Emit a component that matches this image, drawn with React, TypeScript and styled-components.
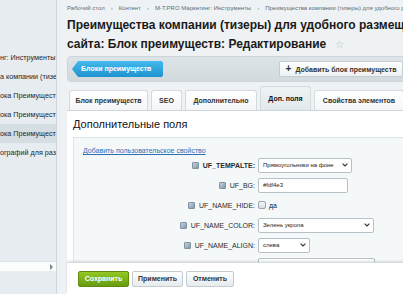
import React from 'react';
import styled, { createGlobalStyle } from 'styled-components';

const GlobalStyle = createGlobalStyle`
  html, body {
    margin: 0;
    padding: 0;
  }
  body {
    width: 403px;
    height: 294px;
    overflow: hidden;
    background: #eef2f4;
    font-family: "Liberation Sans", Arial, sans-serif;
    color: #000;
  }
`;

const Page = styled.div`
  display: flex;
  width: 403px;
  height: 294px;
  overflow: hidden;
`;

const Sidebar = styled.div`
  width: 57px;
  flex-shrink: 0;
  box-sizing: border-box;
  background: #e6ecef;
  border-right: 1px solid #cdd6db;
  display: flex;
  flex-direction: column;
  padding-top: 48px;
  overflow: hidden;
`;

const MenuItem = styled.div<{ $active?: boolean }>`
  height: 19px;
  line-height: 19px;
  white-space: nowrap;
  overflow: hidden;
  font-size: 7.2px;
  color: #1e272c;
  background: ${p => (p.$active ? '#d5dee3' : 'transparent')};
`;

const SideScroll = styled.div`
  margin-top: auto;
  margin-bottom: 23px;
  height: 9px;
  background: #fbfcfc;
  border-top: 1px solid #dbe2e5;
  display: flex;
  justify-content: flex-end;
  align-items: center;
  padding-right: 3px;
`;

const ScrollArrow = styled.span`
  width: 0;
  height: 0;
  border-top: 3px solid transparent;
  border-bottom: 3px solid transparent;
  border-left: 3px solid #7d878c;
`;

const Main = styled.div`
  width: 346px;
  flex-shrink: 0;
  padding-left: 10px;
  display: flex;
  flex-direction: column;
  overflow: hidden;
`;

const Column = styled.div`
  width: 345px;
  display: flex;
  flex-direction: column;
`;

const Breadcrumbs = styled.div`
  margin-top: 4px;
  height: 8px;
  line-height: 8px;
  font-size: 6px;
  color: #5d6c75;
  white-space: nowrap;
`;

const Sep = styled.span`
  margin: 0 6px;
  color: #8a979e;
`;

const Title = styled.h1`
  margin: 4px 0 0;
  font-size: 12px;
  line-height: 19px;
  font-weight: bold;
  color: #1a1a1a;
  white-space: nowrap;
`;

const Star = styled.span`
  margin-left: 9px;
  font-size: 10px;
  line-height: 10px;
  font-weight: normal;
  color: #b4bdc3;
`;

const Toolbar = styled.div`
  margin-top: 2px;
  height: 26px;
  width: 345px;
  box-sizing: border-box;
  border-radius: 4px;
  background: linear-gradient(#dde4e7, #d2dade);
  border: 1px solid #cdd5d9;
  display: flex;
  align-items: center;
  justify-content: space-between;
  padding: 0 8px 0 4px;
`;

const BackButton = styled.div`
  height: 16px;
  width: 91px;
  box-sizing: border-box;
  padding-left: 9px;
  line-height: 16px;
  font-size: 7px;
  font-weight: bold;
  color: #fff;
  border-radius: 2px;
  background: linear-gradient(#43b9ee, #1e93cf);
  clip-path: polygon(6px 0, 100% 0, 100% 100%, 6px 100%, 0 50%);
`;

const AddButton = styled.div`
  height: 16px;
  width: 124px;
  box-sizing: border-box;
  display: flex;
  align-items: center;
  justify-content: center;
  gap: 4px;
  font-size: 7px;
  font-weight: bold;
  color: #333;
  border: 1px solid #c4cdd1;
  border-radius: 2px;
  background: linear-gradient(#ffffff, #eef1f2);
`;

const Plus = styled.span`
  font-size: 10px;
  line-height: 10px;
`;

const Tabs = styled.div`
  margin-top: 4px;
  height: 24px;
  padding-left: 2px;
  display: flex;
  align-items: flex-end;
  gap: 3px;
`;

const Tab = styled.div<{ $active?: boolean; $w: number }>`
  width: ${p => p.$w}px;
  height: ${p => (p.$active ? 24 : 20)}px;
  box-sizing: border-box;
  flex-shrink: 0;
  display: flex;
  align-items: center;
  justify-content: center;
  font-size: 7px;
  font-weight: bold;
  color: ${p => (p.$active ? '#111' : '#333')};
  border: 1px solid #d3dbdf;
  border-bottom: none;
  border-radius: 3px 3px 0 0;
  background: ${p =>
    p.$active ? 'linear-gradient(#eef2f4, #e2e9ec)' : 'linear-gradient(#ffffff, #f3f6f7)'};
`;

const Panel = styled.div`
  height: 152px;
  box-sizing: border-box;
  background: #fff;
  border-top: 1px solid #cdd6da;
  padding-left: 6px;
  overflow: hidden;
`;

const PanelTitle = styled.div`
  margin-top: 6px;
  font-size: 11px;
  line-height: 14px;
  color: #111;
`;

const FieldBox = styled.div`
  margin-top: 6px;
  background: #f5f8f9;
  border: 1px solid #dbe4e8;
  border-right: none;
  padding: 9px 0 0 9px;
  height: 200px;
`;

const AddLink = styled.a`
  display: block;
  font-size: 7px;
  line-height: 8px;
  color: #2b6fb4;
  text-decoration: underline;
  margin-bottom: 0;
`;

const Fields = styled.div`
  display: grid;
  grid-template-columns: 172px auto;
  grid-auto-rows: 20px;
  column-gap: 3px;
  align-items: center;
`;

const Label = styled.div<{ $bold?: boolean }>`
  display: flex;
  justify-content: flex-end;
  align-items: center;
  gap: 4px;
  font-size: 7px;
  font-weight: ${p => (p.$bold ? 'bold' : 'normal')};
  color: #2a2a2a;
  white-space: nowrap;
`;

const FieldIcon = styled.span`
  width: 7px;
  height: 7px;
  box-sizing: border-box;
  border: 1px solid #7f92a4;
  border-radius: 1px;
  background: linear-gradient(135deg, #c7d3dd, #8397aa);
`;

const Control = styled.div<{ $w: number }>`
  width: ${p => p.$w}px;
  height: 15px;
  box-sizing: border-box;
  display: flex;
  align-items: center;
  justify-content: space-between;
  gap: 2px;
  padding: 0 3px 0 4px;
  font-size: 6px;
  color: #222;
  background: #fff;
  border: 1px solid #b5c1c8;
  border-radius: 2px;
  white-space: nowrap;
  overflow: hidden;
`;

const Chevron = styled.svg`
  width: 6px;
  height: 4px;
  flex-shrink: 0;
`;

const CheckRow = styled.div`
  display: flex;
  align-items: center;
  gap: 3px;
  font-size: 7px;
  color: #222;
`;

const Check = styled.span`
  width: 8px;
  height: 8px;
  box-sizing: border-box;
  border: 1px solid #9aa5ab;
  border-radius: 2px;
  background: linear-gradient(#f4f5f6, #d8dcdf);
`;

const Footer = styled.div`
  height: 31px;
  background: #fff;
  border-top: 1px solid #d6dde0;
  box-shadow: 0 -1px 2px rgba(0, 0, 0, 0.12);
  display: flex;
  align-items: center;
  gap: 3px;
  padding-left: 11px;
  position: relative;
`;

const Button = styled.div<{ $primary?: boolean; $w: number }>`
  width: ${p => p.$w}px;
  height: 16px;
  box-sizing: border-box;
  display: flex;
  align-items: center;
  justify-content: center;
  font-size: 7px;
  font-weight: bold;
  border-radius: 2px;
  color: ${p => (p.$primary ? '#fff' : '#333')};
  border: 1px solid ${p => (p.$primary ? '#5f8b0e' : '#c3ccd1')};
  background: ${p =>
    p.$primary ? 'linear-gradient(#93c824, #689c10)' : 'linear-gradient(#ffffff, #e6ebed)'};
`;

const SelectArrow = () => (
  <Chevron viewBox="0 0 6 4">
    <path d="M0.6 0.6 L3 3 L5.4 0.6" fill="none" stroke="#333" strokeWidth="1.1" />
  </Chevron>
);

const menu = [
  'нг: Инструменты',
  'а компании (тизеры)',
  'ока Преимущества',
  'ока Преимущества',
  'ока Преимущества',
  'ографий для размещения',
];

const tabs = [
  { title: 'Блок преимуществ', w: 79 },
  { title: 'SEO', w: 31 },
  { title: 'Дополнительно', w: 72 },
  { title: 'Доп. поля', w: 51, active: true },
  { title: 'Свойства элементов', w: 90 },
];

export default function App() {
  return (
    <>
      <GlobalStyle />
      <Page>
        <Sidebar>
          {menu.map((m, i) => (
            <MenuItem key={i} $active={i === 4}>
              {m}
            </MenuItem>
          ))}
          <SideScroll>
            <ScrollArrow />
          </SideScroll>
        </Sidebar>
        <Main>
          <Column>
            <Breadcrumbs>
              Рабочий стол<Sep>›</Sep>Контент<Sep>›</Sep>M-T.PRO Маркетинг: Инструменты<Sep>›</Sep>
              Преимущества компании (тизеры) для удобного размещения
            </Breadcrumbs>
            <Title>
              Преимущества компании (тизеры) для удобного размещения на главной
              <br />
              сайта: Блок преимуществ: Редактирование
              <Star>☆</Star>
            </Title>
            <Toolbar>
              <BackButton>Блоки преимуществ</BackButton>
              <AddButton>
                <Plus>+</Plus>Добавить блок преимуществ
              </AddButton>
            </Toolbar>
            <Tabs>
              {tabs.map(t => (
                <Tab key={t.title} $w={t.w} $active={t.active}>
                  {t.title}
                </Tab>
              ))}
            </Tabs>
            <Panel>
              <PanelTitle>Дополнительные поля</PanelTitle>
              <FieldBox>
                <AddLink>Добавить пользовательское свойство</AddLink>
                <Fields>
                  <Label $bold>
                    <FieldIcon />
                    UF_TEMPALTE:
                  </Label>
                  <Control $w={94}>
                    Прямоугольники на фоне
                    <SelectArrow />
                  </Control>

                  <Label>
                    <FieldIcon />
                    UF_BG:
                  </Label>
                  <Control $w={90}>#fdf4e3</Control>

                  <Label>
                    <FieldIcon />
                    UF_NAME_HIDE:
                  </Label>
                  <CheckRow>
                    <Check />
                    да
                  </CheckRow>

                  <Label>
                    <FieldIcon />
                    UF_NAME_COLOR:
                  </Label>
                  <Control $w={116}>
                    Зелень укропа
                    <SelectArrow />
                  </Control>

                  <Label>
                    <FieldIcon />
                    UF_NAME_ALIGN:
                  </Label>
                  <Control $w={52}>
                    слева
                    <SelectArrow />
                  </Control>

                  <Label>
                    <FieldIcon />
                    UF_NAME_SIZE:
                  </Label>
                  <Control $w={117} />
                </Fields>
              </FieldBox>
            </Panel>
            <Footer>
              <Button $primary $w={51}>
                Сохранить
              </Button>
              <Button $w={51}>Применить</Button>
              <Button $w={48}>Отменить</Button>
            </Footer>
          </Column>
        </Main>
      </Page>
    </>
  );
}
